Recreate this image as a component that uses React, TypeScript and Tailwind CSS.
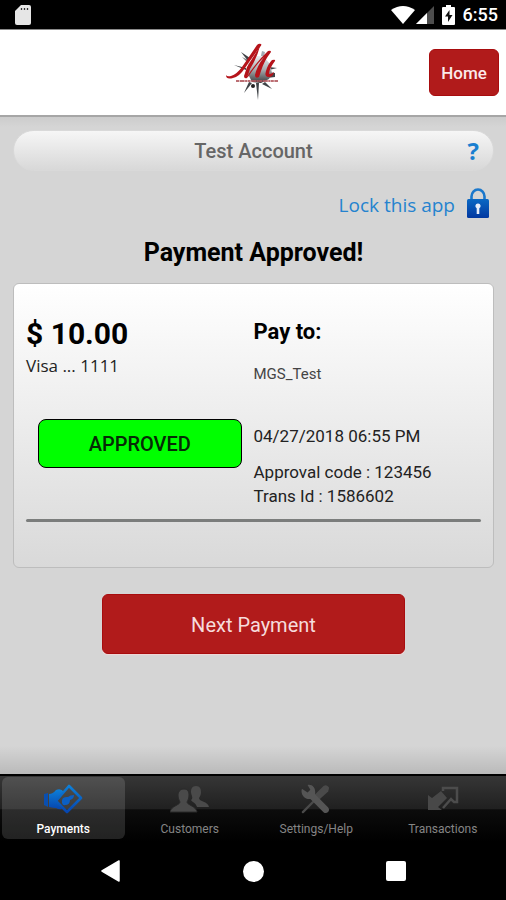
import type { ReactNode } from "react";

function StatusBar() {
  return (
    <div className="flex h-[30px] shrink-0 items-center justify-between border-b border-[#8a8a8a] bg-black pl-[15px] pr-2 text-white">
      <svg width="16" height="20" viewBox="0 0 16 20" aria-hidden="true">
        <path d="M6 0h8a2 2 0 0 1 2 2v16a2 2 0 0 1-2 2H2a2 2 0 0 1-2-2V6z" fill="#e6e6e6" />
        <path d="M6.500 3v2M9.500 3v2M12.500 3v2" stroke="#333" strokeWidth="1.300" />
      </svg>
      <div className="flex items-center">
        <svg width="24" height="18" viewBox="0 0 24 18" aria-hidden="true">
          <path d="M0 4Q12-4 24 4L12 18z" fill="#fff" />
        </svg>
        <svg className="ml-px" width="18" height="18" viewBox="0 0 18 18" aria-hidden="true">
          <path d="M0 18L18 0v18z" fill="#4d4d4d" />
          <path d="M0 18L11 7v11z" fill="#fff" />
        </svg>
        <svg className="ml-2" width="13" height="20" viewBox="0 0 13 20" aria-hidden="true">
          <path d="M4 0h5v2h3a1 1 0 0 1 1 1v16a1 1 0 0 1-1 1H1a1 1 0 0 1-1-1V3a1 1 0 0 1 1-1h3z" fill="#fff" />
          <path d="M7.500 5L3 11.500h3V17l4.500-7h-3z" fill="#111" />
        </svg>
        <span className="ml-2 text-lg font-medium leading-6">6:55</span>
      </div>
    </div>
  );
}

function Logo() {
  return (
    <svg width="58" height="60" viewBox="0 0 58 60" role="img" aria-label="Company logo">
      <defs>
        <linearGradient id="splat" x1="0" y1="0" x2="0" y2="1">
          <stop offset="0" stopColor="#e9eef1" />
          <stop offset="0.5" stopColor="#a9adb0" />
          <stop offset="1" stopColor="#3a3a3c" />
        </linearGradient>
      </defs>
      <g fill="#3f4347">
        <path d="M17 9l9 6-2 3z" />
        <path d="M18 14l6 3-1 2z" opacity="0.7" />
        <path d="M10 22l12 3v2z" />
        <path d="M38 8l3 1-2 9-3-1z" fill="#a4adb5" />
        <path d="M45 24l8 1-8 2z" />
        <path d="M44 29l7 1v4l-8 1z" />
        <path d="M25 39l3 1-8 10z" />
        <path d="M32 40h3l-1 17z" />
        <path d="M38 41l3-2 7 7z" />
      </g>
      <path d="M24 21l7-8 8 0 7 8 2 9-3 6-8 4-9-1-4-8z" fill="url(#splat)" />
      <circle cx="29" cy="43" r="2" fill="#222" />
      <g fill="#b5141b">
        <path d="M2 32q1 2 5 1q6-2 11-9q7-10 15-22q2-2 4-1q1 1-1 3q-9 12-15 21q-6 9-12 10q-7 2-7-3z" />
        <path d="M36 3q-3 12-10 23l-3 9q-3 1-3-2l3-9z" />
        <path d="M22 35Q33 18 44 8q3-1 3 1Q40 18 37 28l-2 6q-4 2-4-2 2-9 9-18Q31 23 24 34z" />
        <path d="M48 17q4-1 3 1-6 8-6 13 3 0 5-2-1 5-5 5-5 0-3-6 2-7 6-11z" />
      </g>
      <path d="M12 38h42" stroke="#b0555b" strokeWidth="2" strokeDasharray="3 .6 5 .5 2 .5" opacity="0.85" />
    </svg>
  );
}

function Header() {
  return (
    <header className="grid h-[87px] shrink-0 grid-cols-[1fr_auto_1fr] items-center border-b-2 border-[#a6a6a6] bg-white px-[7px]">
      <span />
      <Logo />
      <button className="h-[47px] w-[70px] justify-self-end rounded-md border border-[#a80c0e] bg-[#b11b1b] pt-0.5 text-[17px] font-medium text-[#fbeaea]">
        Home
      </button>
    </header>
  );
}

function LockIcon() {
  return (
    <svg width="22" height="30" viewBox="0 0 22 30" aria-hidden="true">
      <defs>
        <linearGradient id="lock" x1="0" y1="0" x2="0" y2="1">
          <stop offset="0" stopColor="#0a68c4" />
          <stop offset="1" stopColor="#0238a0" />
        </linearGradient>
      </defs>
      <path d="M4.500 12V8.500a6.500 7 0 0 1 13 0V12" fill="none" stroke="#1a78cc" strokeWidth="2.600" />
      <rect y="11" width="22" height="19" rx="1.500" fill="url(#lock)" />
      <path d="M11 15.500a2.500 2.500 0 0 1 1.300 4.700V26H9.700v-5.800A2.500 2.500 0 0 1 11 15.500z" fill="#e8eefa" />
    </svg>
  );
}

function Receipt() {
  return (
    <section className="rounded-md border border-[#bdbdbd] bg-gradient-to-b from-white to-[#d9d9d9] px-3 pb-[45px] pt-[30px] text-black">
      <div className="grid grid-cols-2">
        <div>
          <p className="text-[30px] font-bold leading-10">$ 10.00</p>
          <p className="font-['Open_Sans','Noto_Sans',sans-serif] text-[17px] leading-6 text-[#222]">Visa ... 1111</p>
        </div>
        <div>
          <h2 className="text-[22px] font-bold leading-9">Pay to:</h2>
          <p className="mt-3 text-[15px] leading-6 text-[#444]">MGS_Test</p>
        </div>
      </div>
      <div className="mt-[33px] grid grid-cols-2">
        <div className="px-3">
          <div className="flex h-[49px] items-center justify-center rounded-lg border border-black bg-[#00ff00] text-xl font-medium text-[#062b06]">
            APPROVED
          </div>
        </div>
        <div className="pt-[5px] text-[17px] leading-6 text-[#222]">
          <p>04/27/2018 06:55 PM</p>
          <p className="mt-3">Approval code : 123456</p>
          <p>Trans Id : 1586602</p>
        </div>
      </div>
      <hr className="mt-[11px] h-[3px] rounded border-0 bg-[#7b7d7c]" />
    </section>
  );
}

function PaymentsIcon() {
  return (
    <svg width="40" height="30" viewBox="0 0 40 30" aria-hidden="true">
      <defs>
        <linearGradient id="pay" x1="0" y1="0" x2="0" y2="1">
          <stop offset="0" stopColor="#0d7fd8" />
          <stop offset="1" stopColor="#0646b0" />
        </linearGradient>
      </defs>
      <path d="M1 10l4-1v14l-4-2z" fill="#0a4fb0" />
      <path d="M6 10q4 0 7-4 5-2 8 2l-6 6-2 4 6 7q-3 1-6-1-3 0-7-1z" fill="url(#pay)" />
      <path d="M26 2l12 12-14 14-11-11z" fill="none" stroke="url(#pay)" strokeWidth="2.600" strokeLinejoin="round" />
      <path d="M19 19q-1-7 6-6 2-2 6-2 0 4-4 5 0 5-5 5-2 1-3-2z" fill="#0b5fc4" />
    </svg>
  );
}

function CustomersIcon() {
  return (
    <svg width="40" height="30" viewBox="0 0 40 30" fill="#4a4a4a" aria-hidden="true">
      <path d="M26 2c4 0 5 3 5 6 0 3-1 4-2 6 0 4 9 3 10 9H27c-1-4-5-5-6-7 3-2 0-5 0-8 0-3 1-6 5-6z" />
      <path d="M14 5c4 0 5 3 5 6 0 3-1 5-2 7 0 3 9 4 10 10H0c1-6 10-7 10-10-1-2-2-4-2-7 0-3 2-6 6-6z" stroke="#2a2a2a" strokeWidth="1" />
    </svg>
  );
}

function SettingsIcon() {
  return (
    <svg width="32" height="30" viewBox="0 0 34 32" aria-hidden="true">
      <path d="M25 2q4-2 6 2l-1 4-10 9-5-5z" fill="#4a4a4a" />
      <path d="M17 16L3 30" stroke="#4a4a4a" strokeWidth="2.500" strokeLinecap="round" />
      <path d="M2 5l6 4 3-3-3-5c6-1 9 4 8 10l14 14c3 4-2 8-5 5L11 16C5 17 0 11 2 5z" fill="#555555" />
    </svg>
  );
}

function TransactionsIcon() {
  return (
    <svg width="32" height="26" viewBox="0 0 32 26" aria-hidden="true">
      <path d="M16 5V2h14v14h-3l-3-3-8 9" fill="none" stroke="#4c4c4c" strokeWidth="2.500" />
      <path d="M1 24V9l4 3 9-7 6 7-9 9 4 3z" fill="#484848" />
    </svg>
  );
}

function Tab({ label, active, children }: { label: string; active?: boolean; children: ReactNode }) {
  return (
    <a
      href="#"
      aria-current={active ? "page" : undefined}
      className={
        active
          ? "mx-0.5 flex h-[62px] flex-1 flex-col items-center rounded-md bg-white/13 text-xs font-medium leading-4 text-white"
          : "mx-0.5 flex h-[62px] flex-1 flex-col items-center text-xs leading-4 text-[#858585]"
      }
    >
      <span className="flex h-11 items-center justify-center">{children}</span>
      <span>{label}</span>
    </a>
  );
}

export default function App() {
  return (
    <div className="flex min-h-screen flex-col bg-[#d5d5d5] font-['Roboto',sans-serif]">
      <StatusBar />
      <Header />
      <main className="flex flex-1 flex-col bg-[linear-gradient(to_bottom,#cccccc_0,#d5d5d5_10px,#d5d5d5_calc(100%-28px),#bababa_100%)] pb-8 pl-[13px] pr-3 pt-[13px]">
        <div className="grid h-[41px] grid-cols-[1fr_auto_1fr] items-center rounded-full border border-[#d9d9d9] bg-gradient-to-b from-[#f6f6f6] to-[#d8d8d8] px-3.5">
          <span />
          <span className="text-xl font-medium text-[#666]">Test Account</span>
          <button aria-label="Help" className="justify-self-end font-['Open_Sans',sans-serif] text-2xl font-bold leading-8 text-[#1a7fd0]">
            ?
          </button>
        </div>
        <button className="mr-[5px] mt-4 flex h-8 items-center gap-3 self-end font-['Open_Sans','Noto_Sans',sans-serif] text-[19px] text-[#2583cf]">
          <span className="pt-1">Lock this app</span>
          <LockIcon />
        </button>
        <h1 className="mb-3 mt-4 text-center text-[25px] font-bold leading-9 text-black">Payment Approved!</h1>
        <Receipt />
        <button className="mx-auto mt-[26px] h-[60px] w-[63%] rounded-md border border-[#a80c0e] bg-[#b11b1b] pt-0.5 text-xl text-[#f6dcdc] shadow-[0_1px_1px_#f0d8d8]">
          Next Payment
        </button>
      </main>
      <nav className="flex h-[68px] shrink-0 border-t-2 border-black bg-[linear-gradient(to_bottom,#363636_0,#202020_50%,#0c0c0c_51%,#000_100%)] pt-px">
        <Tab label="Payments" active>
          <PaymentsIcon />
        </Tab>
        <Tab label="Customers">
          <CustomersIcon />
        </Tab>
        <Tab label="Settings/Help">
          <SettingsIcon />
        </Tab>
        <Tab label="Transactions">
          <TransactionsIcon />
        </Tab>
      </nav>
      <div className="flex h-[58px] shrink-0 items-center justify-center gap-[122px] bg-black">
        <button aria-label="Back">
          <svg width="20" height="22" viewBox="0 0 20 22" aria-hidden="true">
            <path d="M1 11L18 1v20z" fill="#fff" stroke="#fff" strokeWidth="1.500" strokeLinejoin="round" />
          </svg>
        </button>
        <button aria-label="Home screen" className="size-[21px] rounded-full bg-white" />
        <button aria-label="Recent apps" className="size-5 rounded-xs bg-white" />
      </div>
    </div>
  );
}
